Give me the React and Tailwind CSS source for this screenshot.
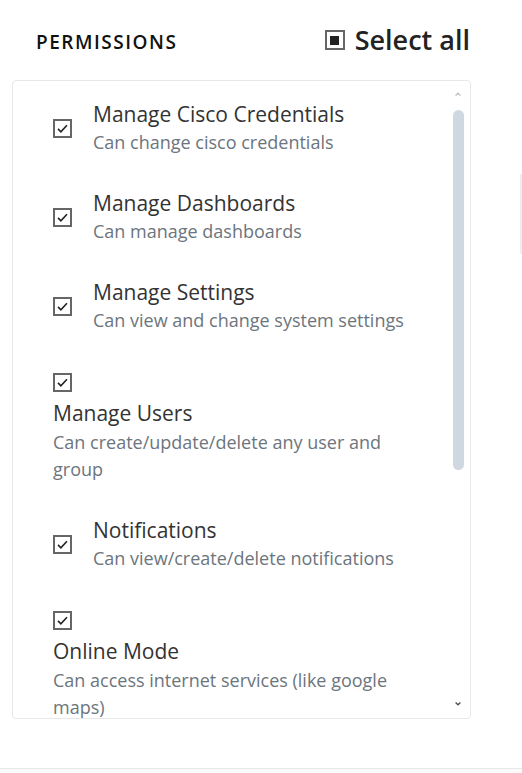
import React from 'react';

const perms = [
  { title: 'Manage Cisco Credentials', desc: 'Can change cisco credentials' },
  { title: 'Manage Dashboards', desc: 'Can manage dashboards' },
  { title: 'Manage Settings', desc: 'Can view and change system settings' },
  { title: 'Manage Users', desc: 'Can create/update/delete any user and group', stacked: true },
  { title: 'Notifications', desc: 'Can view/create/delete notifications' },
  { title: 'Online Mode', desc: 'Can access internet services (like google maps)', stacked: true },
];

const Check = () => (
  <div className="h-[19px] w-[19px] shrink-0 border-2 border-[#666] bg-white flex items-center justify-center">
    <svg viewBox="0 0 16 16" className="h-[13px] w-[13px]" fill="none" stroke="#222" strokeWidth="2">
      <path d="M2.5 8.5l3.5 3.5 7.5-8" />
    </svg>
  </div>
);

const Item = ({ p }) => {
  if (p.stacked) {
    return (
      <div className="w-[350px]">
        <div className="h-[32px] pt-[6px]"><Check /></div>
        <div className="text-[21px] leading-[28px] text-[#333]">{p.title}</div>
        <div className="text-[18px] leading-[27px] text-[#6c757d] mt-[2px]">{p.desc}</div>
      </div>
    );
  }
  return (
    <div className="flex items-center gap-[21px]">
      <Check />
      <div>
        <div className="text-[21px] leading-[28px] text-[#333]">{p.title}</div>
        <div className="text-[18px] leading-[28px] text-[#6c757d]">{p.desc}</div>
      </div>
    </div>
  );
};

export default function App() {
  return (
    <div className="w-[522px] h-[773px] bg-white overflow-hidden" style={{ fontFamily: '"Open Sans", "Noto Sans", sans-serif' }}>
      <div className="flex items-end justify-between pl-[36px] pr-[52px] pt-[22px] h-[64px]">
        <div className="text-[19px] font-semibold tracking-[0.08em] text-[#111] pb-[8px]">PERMISSIONS</div>
        <div className="flex items-center gap-[10px] pb-[6px]">
          <div className="h-[20px] w-[20px] border-2 border-[#666] flex items-center justify-center">
            <div className="h-[9px] w-[9px] bg-[#222]" />
          </div>
          <span className="text-[27px] font-semibold text-[#222] leading-[36px]">Select all</span>
        </div>
      </div>
      <div className="flex justify-between">
        <div className="ml-[12px] mt-[16px] w-[459px] h-[639px] border border-[#e6e8ea] rounded flex overflow-hidden">
          <div className="flex-1 pl-[40px] pt-[19px] flex flex-col gap-[33px]">
            {perms.map((p) => <Item key={p.title} p={p} />)}
          </div>
          <div className="w-[20px] flex flex-col items-center pr-[4px]">
            <svg viewBox="0 0 10 10" className="mt-[9px] h-[8px] w-[8px]" fill="none" stroke="#bbb" strokeWidth="1.6"><path d="M2 7l3-3 3 3" /></svg>
            <div className="mt-[12px] w-[11px] h-[360px] rounded-full bg-[#cfd8e1]" />
            <div className="flex-1" />
            <svg viewBox="0 0 10 10" className="mb-[10px] h-[8px] w-[8px]" fill="none" stroke="#555" strokeWidth="1.8"><path d="M2 3l3 3 3-3" /></svg>
          </div>
        </div>
        <div className="mt-[110px] w-[2px] h-[80px] bg-[#eee]" />
      </div>
      <div className="mt-[49px] border-t border-[#e6e8ea] h-[10px] bg-[#fafafa]" />
    </div>
  );
}
